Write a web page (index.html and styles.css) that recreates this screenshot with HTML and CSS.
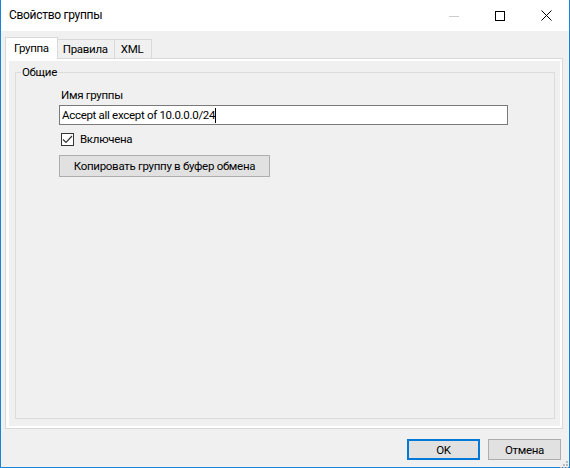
FILE: index.html
```html
<!DOCTYPE html>
<html lang="ru">
<head>
    <meta charset="UTF-8">
    <title>Свойство группы</title>
    <link rel="stylesheet" href="styles.css">
</head>
<body>
    <div class="window">
        <div class="titlebar">
            <span class="title">Свойство группы</span>
            <div class="caption-buttons">
                <span class="cap-btn">
                    <svg width="10" height="10" viewBox="0 0 10 10"><path d="M0 5.5H10" stroke="#cccccc" stroke-width="1"/></svg>
                </span>
                <span class="cap-btn">
                    <svg width="10" height="10" viewBox="0 0 10 10"><rect x="0.5" y="0.5" width="9" height="9" fill="none" stroke="#000" stroke-width="1"/></svg>
                </span>
                <span class="cap-btn">
                    <svg width="11" height="11" viewBox="0 0 11 11"><path d="M0.5 0.5L10.5 10.5M10.5 0.5L0.5 10.5" stroke="#000" stroke-width="1"/></svg>
                </span>
            </div>
        </div>

        <div class="client">
            <div class="tab-strip">
                <div class="tab active">Группа</div>
                <div class="tab">Правила</div>
                <div class="tab">XML</div>
            </div>
            <div class="tab-page">
                <div class="page">
                    <fieldset class="group">
                        <legend>Общие</legend>
                        <div class="group-body">
                            <div class="field-label">Имя группы</div>
                            <div class="textbox">Accept all except of 10.0.0.0/24<span class="caret"></span></div>
                            <div class="check">
                                <span class="checkbox">
                                    <svg width="11" height="11" viewBox="0 0 11 11"><path d="M1 5.5L4 8.5L10 2" fill="none" stroke="#333" stroke-width="1.2"/></svg>
                                </span>
                                <span>Включена</span>
                            </div>
                            <button class="btn copy-btn">Копировать группу в буфер обмена</button>
                        </div>
                    </fieldset>
                </div>
            </div>
            <div class="footer">
                <button class="btn default">OK</button>
                <button class="btn">Отмена</button>
            </div>
        </div>

        <div class="size-grip">
            <svg width="8" height="8" viewBox="0 0 8 8" fill="#bcbcbc">
                <rect x="6" y="0" width="2" height="2"/>
                <rect x="3" y="3" width="2" height="2"/>
                <rect x="6" y="3" width="2" height="2"/>
                <rect x="0" y="6" width="2" height="2"/>
                <rect x="3" y="6" width="2" height="2"/>
                <rect x="6" y="6" width="2" height="2"/>
            </svg>
        </div>
    </div>
</body>
</html>
```

FILE: styles.css
```css
body {
    margin: 0;
    font-family: Roboto, "Noto Sans", sans-serif;
    font-size: 11.5px;
    letter-spacing: -0.3px;
    color: #000;
    background: #f0f0f0;
}

.window {
    position: relative;
    width: 570px;
    height: 468px;
    box-sizing: border-box;
    border: 1px solid #1883d7;
    border-top: none;
    background: #f0f0f0;
    display: flex;
    flex-direction: column;
}

.titlebar {
    height: 31px;
    background: #fff;
    display: flex;
    align-items: center;
    justify-content: space-between;
}

.title {
    padding-left: 8px;
    padding-bottom: 1px;
    font-size: 12px;
}

.caption-buttons {
    display: flex;
    height: 100%;
}

.cap-btn {
    width: 46px;
    display: flex;
    align-items: center;
    justify-content: center;
}

.client {
    flex: 1;
    display: flex;
    flex-direction: column;
    padding: 6px 6px 0 4px;
}

.tab-strip {
    display: flex;
    align-items: flex-end;
    height: 21px;
    position: relative;
    z-index: 1;
}

.tab {
    height: 19px;
    line-height: 18px;
    box-sizing: border-box;
    padding: 0 6px 0 5px;
    border: 1px solid #d9d9d9;
    border-bottom: none;
    border-left: none;
    background: #f0f0f0;
}

.tab:last-child {
    padding: 0 8px 0 6px;
}

.tab.active {
    height: 22px;
    margin-bottom: -1px;
    padding: 0 8px;
    border-left: 1px solid #d9d9d9;
    background: #fff;
    line-height: 20px;
}

.tab-page {
    height: 371px;
    box-sizing: border-box;
    border: 1px solid #d9d9d9;
    background: #fff;
    padding: 2px 2px 2px 3px;
    display: flex;
}

.page {
    flex: 1;
    background: #f0f0f0;
    padding: 3px 5px 7px 6px;
    display: flex;
}

.group {
    flex: 1;
    margin: 0;
    padding: 0;
    border: 1px solid #dcdcdc;
    min-width: 0;
}

.group legend {
    margin-left: 5px;
    padding: 0 1px;
    line-height: 16px;
}

.group-body {
    padding: 7px 0 0 43px;
}

.field-label {
    padding-left: 2px;
    line-height: 16px;
}

.textbox {
    margin-top: 2px;
    width: 449px;
    height: 20px;
    box-sizing: border-box;
    border: 1px solid #7a7a7a;
    background: #fff;
    padding: 0 2px;
    line-height: 17px;
    display: flex;
    align-items: center;
    white-space: pre;
}

.caret {
    width: 1px;
    height: 15px;
    background: #000;
}

.check {
    margin-top: 6px;
    padding-left: 2px;
    display: flex;
    align-items: center;
    gap: 6px;
    line-height: 16px;
}

.checkbox {
    width: 13px;
    height: 13px;
    box-sizing: border-box;
    border: 1px solid #333;
    background: #fff;
    display: flex;
    align-items: center;
    justify-content: center;
}

.btn {
    font-family: inherit;
    font-size: 11.5px;
    letter-spacing: -0.3px;
    color: #000;
    background: #e1e1e1;
    border: 1px solid #adadad;
    padding: 0;
    height: 21px;
    width: 73px;
    box-sizing: border-box;
}

.copy-btn {
    margin-top: 8px;
    width: 211px;
    height: 22px;
}

.footer {
    display: flex;
    justify-content: flex-end;
    gap: 8px;
    margin-top: 10px;
    padding-right: 2px;
}

.btn.default {
    border: 2px solid #0078d7;
}

.size-grip {
    position: absolute;
    right: 1px;
    bottom: 1px;
    width: 8px;
    height: 8px;
}
```
